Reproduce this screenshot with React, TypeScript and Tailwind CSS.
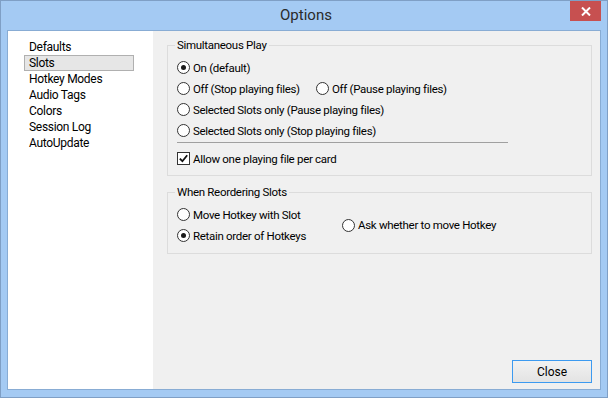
import React from "react";

const font = { fontFamily: 'Roboto, "Noto Sans", sans-serif' };

function Radio({ checked, label }: { checked?: boolean; label: string }) {
  return (
    <div className="flex items-center h-[21px]">
      <span className="w-[13px] h-[13px] rounded-full border border-[#333333] bg-white flex items-center justify-center shrink-0">
        {checked && <span className="w-[5px] h-[5px] rounded-full bg-[#1a1a1a]" />}
      </span>
      <span className="ml-[3px] text-[11.5px] leading-[16px] tracking-[-0.3px] text-black whitespace-nowrap">{label}</span>
    </div>
  );
}

function Check({ label }: { label: string }) {
  return (
    <div className="flex items-center h-[21px]">
      <span className="w-[13px] h-[13px] border border-[#333333] bg-white flex items-center justify-center shrink-0">
        <svg width="9" height="9" viewBox="0 0 9 9">
          <path d="M0.8 4.6 L3.4 7.2 L8.2 1.2" fill="none" stroke="#111" strokeWidth="1.8" />
        </svg>
      </span>
      <span className="ml-[3px] text-[11.5px] leading-[16px] tracking-[-0.3px] text-black whitespace-nowrap">{label}</span>
    </div>
  );
}

export default function App() {
  const items = ["Defaults", "Slots", "Hotkey Modes", "Audio Tags", "Colors", "Session Log", "AutoUpdate"];
  return (
    <div style={font} className="w-[608px] h-[398px] border border-[#7f9fc5] bg-[#a4caf3] flex flex-col">
      <div className="h-[29px] shrink-0 grid grid-cols-[1fr_auto_1fr]">
        <div />
        <div className="text-[15px] leading-[29px] text-[#2a2a2a] pl-[4px]">Options</div>
        <div className="flex justify-end items-start pr-[6px]">
          <div className="w-[31px] h-[20px] bg-[#c75050] flex items-center justify-center">
            <svg width="10" height="9" viewBox="0 0 10 9">
              <path d="M1 0.5 L9 8.5 M9 0.5 L1 8.5" stroke="white" strokeWidth="2" />
            </svg>
          </div>
        </div>
      </div>
      <div className="mx-[6px] h-[360px] border border-[#88acd4] flex">
        <div className="w-[145px] bg-white pt-[8px] pl-[16px]">
          {items.map((it) =>
            it === "Slots" ? (
              <div key={it} className="w-[110px] h-[16px] border border-[#b0b0b0] bg-[#e6e6e6] pl-[4px] text-[12px] leading-[14px] tracking-[-0.3px] text-black">
                {it}
              </div>
            ) : (
              <div key={it} className="h-[16px] pl-[5px] text-[12px] leading-[16px] tracking-[-0.3px] text-black">
                {it}
              </div>
            )
          )}
        </div>
        <div className="flex-1 bg-[#f0f0f0] flex flex-col pt-[6px] pl-[14px] pr-[8px]">
          <fieldset className="border border-[#dcdcdc] pl-[7px] pb-[6px]">
            <legend className="px-[2px] text-[11.5px] leading-[16px] tracking-[-0.3px] text-black">Simultaneous Play</legend>
            <div className="ml-[2px] pt-[4px]">
              <Radio checked label="On (default)" />
              <div className="flex">
                <div className="w-[139px]">
                  <Radio label="Off (Stop playing files)" />
                </div>
                <Radio label="Off (Pause playing files)" />
              </div>
              <Radio label="Selected Slots only (Pause playing files)" />
              <Radio label="Selected Slots only (Stop playing files)" />
              <div className="mt-[1px] w-[331px] h-px bg-[#a0a0a0]" />
              <div className="mt-[5px]">
                <Check label="Allow one playing file per card" />
              </div>
            </div>
          </fieldset>
          <fieldset className="mt-[8px] border border-[#dcdcdc] pl-[7px] pb-[7px]">
            <legend className="px-[2px] text-[11.5px] leading-[16px] tracking-[-0.3px] text-black">When Reordering Slots</legend>
            <div className="ml-[2px] pt-[4px] flex items-center">
              <div className="w-[165px]">
                <Radio label="Move Hotkey with Slot" />
                <Radio checked label="Retain order of Hotkeys" />
              </div>
              <Radio label="Ask whether to move Hotkey" />
            </div>
          </fieldset>
          <div className="flex-1" />
          <div className="flex justify-end mb-[6px]">
            <div className="w-[80px] h-[23px] border border-[#3c9af0] bg-gradient-to-b from-[#f2f2f2] to-[#e3e3e3] flex items-center justify-center text-[12px] text-black">
              Close
            </div>
          </div>
        </div>
      </div>
    </div>
  );
}
